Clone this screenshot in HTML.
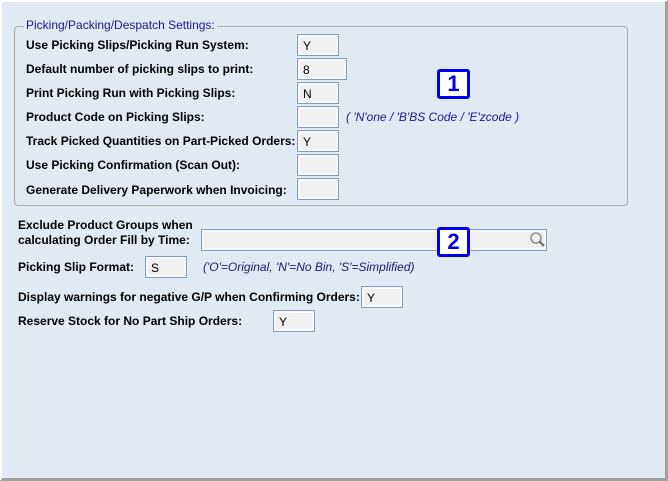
<!DOCTYPE html>
<html><head><style>
body{margin:0;width:668px;height:481px;background:#e1e9f3;position:relative;overflow:hidden;font-family:"Liberation Sans",Arial,sans-serif;}
#frame{position:absolute;left:0;top:0;width:663px;height:476px;border-left:2px solid #fff;border-top:2px solid #fff;border-right:3px solid #a0a0a0;border-bottom:3px solid #a0a0a0;background:#e1e9f3;}
.l{position:absolute;font-size:12px;font-weight:bold;color:#000;white-space:nowrap;line-height:14px;}
.i{position:absolute;box-sizing:border-box;border:1px solid #7f9dbf;background:#f0f0f0;box-shadow:inset 0 0 0 2px #fafafa;font-size:12px;padding:4px 0 0 5px;line-height:14px;}
.h{position:absolute;font-size:12px;font-style:italic;color:#1a1a8c;white-space:nowrap;line-height:14px;}
.g{position:absolute;left:14px;top:26px;width:612px;height:178px;border:1px solid #a9a9a9;border-radius:4px;}
.lg{position:absolute;left:24px;top:18px;background:#e1e9f3;padding:0 2px;font-size:12px;color:#1a1a8c;line-height:14px;}
.b{position:absolute;box-sizing:border-box;width:33px;height:30px;border:3px solid #0000ee;border-radius:3px;background:#fff;color:#0000ee;font-weight:bold;font-size:22px;text-align:center;line-height:24px;}
</style></head><body>
<div id="frame"></div>
<div class="g"></div>
<div class="lg">Picking/Packing/Despatch Settings:</div>
<div class="l" style="left:26px;top:38px">Use Picking Slips/Picking Run System:</div>
<div class="l" style="left:26px;top:62px">Default number of picking slips to print:</div>
<div class="l" style="left:26px;top:86px">Print Picking Run with Picking Slips:</div>
<div class="l" style="left:26px;top:110px">Product Code on Picking Slips:</div>
<div class="l" style="left:26px;top:134px">Track Picked Quantities on Part-Picked Orders:</div>
<div class="l" style="left:26px;top:158px">Use Picking Confirmation (Scan Out):</div>
<div class="l" style="left:26px;top:183px">Generate Delivery Paperwork when Invoicing:</div>
<div class="i" style="left:297px;top:34px;width:42px;height:22px">Y</div>
<div class="i" style="left:297px;top:58px;width:50px;height:22px">8</div>
<div class="i" style="left:297px;top:82px;width:42px;height:22px">N</div>
<div class="i" style="left:297px;top:106px;width:42px;height:22px"></div>
<div class="i" style="left:297px;top:130px;width:42px;height:22px">Y</div>
<div class="i" style="left:297px;top:154px;width:42px;height:22px"></div>
<div class="i" style="left:297px;top:178px;width:42px;height:22px"></div>
<div class="h" style="left:346px;top:110px">( 'N'one / 'B'BS Code / 'E'zcode )</div>
<div class="b" style="left:437px;top:69px">1</div>
<div class="l" style="left:18px;top:218px">Exclude Product Groups when</div>
<div class="l" style="left:18px;top:233px">calculating Order Fill by Time:</div>
<div class="i" style="left:201px;top:229px;width:346px;height:22px"></div>
<svg style="position:absolute;left:529px;top:231px" width="17" height="17" viewBox="0 0 17 17"><circle cx="7" cy="7" r="5" fill="#f4f4f4" stroke="#8a8a8a" stroke-width="1.5"/><line x1="10.5" y1="10.5" x2="15" y2="15" stroke="#777" stroke-width="2.5"/></svg>
<div class="b" style="left:437px;top:227px">2</div>
<div class="l" style="left:18px;top:260px">Picking Slip Format:</div>
<div class="i" style="left:145px;top:256px;width:42px;height:22px">S</div>
<div class="h" style="left:203px;top:260px;color:#1a1a6a">('O'=Original, 'N'=No Bin, 'S'=Simplified)</div>
<div class="l" style="left:18px;top:290px">Display warnings for negative G/P when Confirming Orders:</div>
<div class="i" style="left:361px;top:286px;width:42px;height:22px">Y</div>
<div class="l" style="left:18px;top:314px">Reserve Stock for No Part Ship Orders:</div>
<div class="i" style="left:273px;top:310px;width:42px;height:22px">Y</div>
</body></html>
